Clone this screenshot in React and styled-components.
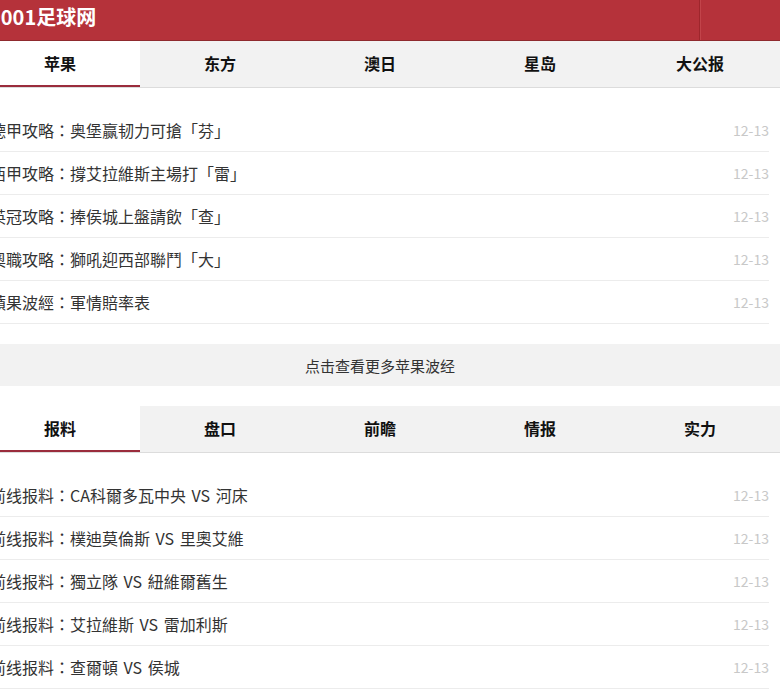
import styled, { createGlobalStyle } from "styled-components";

const GlobalStyle = createGlobalStyle`
  html, body {
    margin: 0;
    padding: 0;
    background: #fff;
    overflow: hidden;
  }
  body {
    font-family: "Noto Sans CJK SC", "Noto Sans", sans-serif;
    color: #333;
  }
`;

const Page = styled.div`
  width: 800px;
  margin-left: -20px;
  background: #fff;
`;

const Header = styled.div`
  height: 40px;
  display: flex;
  align-items: center;
  justify-content: space-between;
  background: #b5323a;
  border-bottom: 1px solid #8f2a2e;
`;

const Title = styled.div`
  padding-left: 9px;
  color: #fff;
  font-size: 20px;
  font-weight: bold;
  line-height: 40px;
  margin-top: -6px;
`;

const HeaderMenu = styled.div`
  width: 80px;
  height: 40px;
  border-left: 1px solid #9e262c;
  box-shadow: inset 1px 0 0 #c2444a;
`;

const Tabs = styled.div`
  display: grid;
  grid-template-columns: repeat(5, 1fr);
  background: #f2f2f2;
  border-bottom: 1px solid #dcdcdc;
`;

const Tab = styled.div`
  height: 46px;
  display: flex;
  align-items: center;
  justify-content: center;
  font-size: 16px;
  font-weight: bold;
  color: #111;
  box-sizing: border-box;
  background: ${(p) => (p.$active ? "#fff" : "transparent")};
  border-bottom: 2px solid ${(p) => (p.$active ? "#9a2c3c" : "transparent")};
`;

const List = styled.ul`
  list-style: none;
  margin: 0;
  padding: 21px 11px 0 10px;
`;

const Row = styled.li`
  height: 42px;
  display: flex;
  align-items: center;
  justify-content: space-between;
  border-bottom: 1px solid #ececec;
`;

const RowTitle = styled.span`
  font-family: "Noto Sans CJK TC", "Noto Sans", sans-serif;
  font-size: 16px;
  color: #333;
  word-spacing: 2px;
`;

const RowDate = styled.span`
  font-size: 14px;
  color: #c8c8c8;
`;

const More = styled.div`
  margin: 20px 0;
  height: 42px;
  background: #f2f2f2;
  display: flex;
  align-items: center;
  justify-content: center;
  font-size: 15px;
  color: #333;
`;

const section1 = {
  tabs: ["苹果", "东方", "澳日", "星岛", "大公报"],
  rows: [
    "德甲攻略：奥堡赢韧力可搶「芬」",
    "西甲攻略：撐艾拉維斯主場打「雷」",
    "英冠攻略：捧侯城上盤請飲「查」",
    "奧職攻略：獅吼迎西部聯鬥「大」",
    "蘋果波經：軍情賠率表",
  ],
};

const section2 = {
  tabs: ["报料", "盘口", "前瞻", "情报", "实力"],
  rows: [
    "前线报料：CA科爾多瓦中央 VS 河床",
    "前线报料：樸迪莫倫斯 VS 里奧艾維",
    "前线报料：獨立隊 VS 紐維爾舊生",
    "前线报料：艾拉維斯 VS 雷加利斯",
    "前线报料：查爾頓 VS 侯城",
  ],
};

function Section({ data }) {
  return (
    <>
      <Tabs>
        {data.tabs.map((t, i) => (
          <Tab key={t} $active={i === 0}>
            {t}
          </Tab>
        ))}
      </Tabs>
      <List>
        {data.rows.map((r) => (
          <Row key={r}>
            <RowTitle>{r}</RowTitle>
            <RowDate>12-13</RowDate>
          </Row>
        ))}
      </List>
    </>
  );
}

export default function App() {
  return (
    <Page>
      <GlobalStyle />
      <Header>
        <Title>9001足球网</Title>
        <HeaderMenu />
      </Header>
      <Section data={section1} />
      <More>点击查看更多苹果波经</More>
      <Section data={section2} />
    </Page>
  );
}
